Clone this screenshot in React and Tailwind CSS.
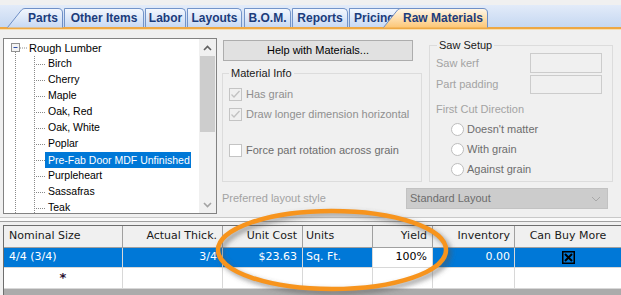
import React from "react";

const treeItems = [
  "Birch",
  "Cherry",
  "Maple",
  "Oak, Red",
  "Oak, White",
  "Poplar",
  "Pre-Fab Door MDF Unfinished",
  "Purpleheart",
  "Sassafras",
  "Teak",
];

const SlantTab = ({ label, width, active, className, textClass }) => {
  const w = width;
  const d = `M0.5,19.5 L14.5,2 Q15.8,0.5 18,0.5 L${w - 5},0.5 Q${w - 0.5},0.5 ${w - 0.5},5 L${w - 0.5},19.5`;
  const gid = active ? "tabActive" : "tabPlain";
  return (
    <div className={`relative h-[19px] shrink-0 flex items-center ${className}`}>
      <svg width={w} height={20} className="absolute left-0 top-0">
        <defs>
          <linearGradient id={gid} x1="0" y1="0" x2="0" y2="1">
            <stop offset="0" stopColor={active ? "#fff8ea" : "#f3f7fd"} />
            <stop offset="1" stopColor={active ? "#fcc777" : "#c7d9f4"} />
          </linearGradient>
        </defs>
        <path d={d} fill={`url(#${gid})`} stroke="#6f8fc6" />
      </svg>
      <span className={`relative text-[12px] font-bold text-[#1b3c7c] ${textClass}`}>
        {label}
      </span>
    </div>
  );
};

const Tab = ({ label, className }) => (
  <div
    className={`h-[19px] shrink-0 flex items-center justify-center border border-b-0 border-[#7394c9] rounded-tr-[5px] rounded-tl-[1px] bg-[linear-gradient(to_bottom,#f3f7fd,#c7d9f4)] text-[12px] font-bold text-[#1b3c7c] ${className}`}
  >
    {label}
  </div>
);

const DisabledCheck = ({ checked }) => (
  <span
    className={`w-[13px] h-[13px] shrink-0 border border-[#c4c4c4] flex items-center justify-center ${
      checked ? "bg-[#f0f0f0]" : "bg-white"
    }`}
  >
    {checked && (
      <svg width="11" height="11" viewBox="0 0 11 11">
        <path d="M1.5,5.5 L4,8 L9.5,2" fill="none" stroke="#c2c2c2" strokeWidth="1.3" />
      </svg>
    )}
  </span>
);

const Radio = ({ label }) => (
  <div className="flex items-center h-[20px] pl-[15px]">
    <span className="w-[13px] h-[13px] rounded-full border border-[#bdbdbd] bg-white shrink-0"></span>
    <span className="ml-[3px] text-[#6d6d6d]">{label}</span>
  </div>
);

const App = () => {
  return (
    <div className="relative w-[621px] h-[295px] overflow-hidden bg-[#f0f0f0] font-['Liberation_Sans',Arial,sans-serif] text-[11px] text-black flex flex-col">
      {/* tab strip */}
      <div className="h-[27px] shrink-0 flex items-end bg-[linear-gradient(to_bottom,#f0f0f0_0px,#f0f0f0_5px,#e2ebf9_5px,#c6d8f2_27px)]">
        <SlantTab label="Parts" width={56} className="ml-[7px] w-[56px]" textClass="pl-[21px]" />
        <Tab label="Other Items" className="ml-[1px] w-[80px]" />
        <Tab label="Labor" className="ml-[1px] w-[41px]" />
        <Tab label="Layouts" className="ml-[1px] w-[55px]" />
        <Tab label="B.O.M." className="ml-[2px] w-[47px]" />
        <Tab label="Reports" className="ml-[1px] w-[56px]" />
        <div className="ml-[1px] w-[52px] h-[19px] shrink-0 border border-b-0 border-[#7394c9] rounded-tl-[1px] bg-[linear-gradient(to_bottom,#f3f7fd,#c7d9f4)] text-[12px] font-bold text-[#1b3c7c] flex items-center pl-[4px] overflow-hidden">
          Pricing
        </div>
        <SlantTab
          label="Raw Materials"
          width={105}
          active
          className="-ml-[18px] w-[105px] z-10"
          textClass="pl-[20px]"
        />
      </div>
      <div className="h-[2px] shrink-0 bg-[#eea844]"></div>
      <div className="h-[1px] shrink-0 bg-[#f8dfb2]"></div>

      {/* main area */}
      <div className="h-[183px] shrink-0 flex">
        {/* tree */}
        <div className="ml-[3px] mt-[8px] w-[214px] h-[176px] border border-[#828282] bg-white flex">
          <div className="flex-1 pt-[1px] overflow-hidden">
            <div className="h-[16px] flex items-center">
              <svg width="25" height="16" className="shrink-0">
                <rect x="7.5" y="3.5" width="8" height="8" fill="#f4f4f4" stroke="#919191" />
                <path d="M9.5,7.5 H13.5" stroke="#2f50a8" strokeWidth="1" />
                <path d="M16,8 H24" stroke="#8a8a8a" strokeDasharray="1 1" />
                <path d="M11.5,12 V16" stroke="#8a8a8a" strokeDasharray="1 1" />
              </svg>
              <span>Rough Lumber</span>
            </div>
            {treeItems.map((item) => {
              const sel = item.startsWith("Pre-Fab");
              return (
                <div key={item} className="h-[16px] flex items-center">
                  <svg width="44" height="16" className="shrink-0">
                    <path d="M11.5,0 V16" stroke="#8a8a8a" strokeDasharray="1 1" />
                    <path d="M30.5,0 V16" stroke="#8a8a8a" strokeDasharray="1 1" />
                    <path d="M32,8.5 H41" stroke="#8a8a8a" strokeDasharray="1 1" />
                  </svg>
                  <span
                    className={`text-[10.5px] whitespace-nowrap ${
                      sel ? "bg-[#0078d7] text-white -ml-[3px] pl-[3px] pr-[1px] leading-[16px]" : ""
                    }`}
                  >
                    {item}
                  </span>
                </div>
              );
            })}
          </div>
          {/* scrollbar */}
          <div className="w-[17px] shrink-0 bg-[#f0f0f0] flex flex-col">
            <div className="h-[17px] flex items-center justify-center">
              <svg width="9" height="6" viewBox="0 0 9 6">
                <path d="M1,5 L4.5,1.5 L8,5" fill="none" stroke="#606060" strokeWidth="1.6" />
              </svg>
            </div>
            <div className="mx-[1px] h-[76px] bg-[#cdcdcd]"></div>
            <div className="flex-1"></div>
            <div className="h-[17px] flex items-center justify-center">
              <svg width="9" height="6" viewBox="0 0 9 6">
                <path d="M1,1 L4.5,4.5 L8,1" fill="none" stroke="#a3a3a3" strokeWidth="1.6" />
              </svg>
            </div>
          </div>
        </div>

        {/* right panel */}
        <div className="flex-1 pl-[6px] pt-[10px] flex flex-col">
          <div className="flex">
            <div className="w-[200px] shrink-0 flex flex-col">
              <div className="w-[190px] h-[21px] border border-[#adadad] bg-[#e1e1e1] flex items-center justify-center">
                Help with Materials...
              </div>
              <div className="relative mt-[12px] -ml-[1px] w-[200px] h-[109px] border border-[#dcdcdc] pt-[13px] pl-[6px]">
                <span className="absolute -top-[7px] left-[6px] px-[2px] bg-[#f0f0f0] text-[#1a1a1a] leading-[13px]">
                  Material Info
                </span>
                <div className="flex items-center h-[14px] gap-[4px]">
                  <DisabledCheck checked />
                  <span className="text-[#8f8f8f]">Has grain</span>
                </div>
                <div className="flex items-center h-[14px] mt-[6px] gap-[4px]">
                  <DisabledCheck checked />
                  <span className="text-[#8f8f8f]">Draw longer dimension horizontal</span>
                </div>
                <div className="flex items-center h-[14px] mt-[22px] gap-[4px]">
                  <DisabledCheck />
                  <span className="text-[#6d6d6d]">Force part rotation across grain</span>
                </div>
              </div>
            </div>

            <div className="relative ml-[6px] mt-[5px] w-[184px] h-[137px] border border-[#dcdcdc] pt-[7px] pl-[6px] pr-[10px]">
              <span className="absolute -top-[7px] left-[7px] px-[2px] bg-[#f0f0f0] text-[#1a1a1a] leading-[13px]">
                Saw Setup
              </span>
              <div className="flex items-center justify-between h-[20px]">
                <span className="text-[#a3a3a3]">Saw kerf</span>
                <span className="w-[72px] h-[20px] border border-[#cccccc] bg-[#f0f0f0]"></span>
              </div>
              <div className="flex items-center justify-between h-[19px] mt-[2px]">
                <span className="text-[#a3a3a3]">Part padding</span>
                <span className="w-[72px] h-[19px] border border-[#cccccc] bg-[#f0f0f0]"></span>
              </div>
              <div className="h-[18px] mt-[6px] flex items-center text-[#a3a3a3]">
                First Cut Direction
              </div>
              <div className="mt-[1px]">
                <Radio label="Doesn't matter" />
                <Radio label="With grain" />
                <Radio label="Against grain" />
              </div>
            </div>
          </div>

          <div className="mt-[6px] flex items-center -ml-[1px]">
            <span className="text-[#a3a3a3] w-[184px]">Preferred layout style</span>
            <div className="w-[202px] h-[21px] border border-[#c2c2c2] bg-[#cccccc] flex items-center justify-between pl-[3px] pr-[6px] text-[#6d6d6d]">
              <span>Standard Layout</span>
              <svg width="10" height="6" viewBox="0 0 10 6">
                <path d="M1,1 L5,5 L9,1" fill="none" stroke="#a8a8a8" strokeWidth="1" />
              </svg>
            </div>
          </div>
        </div>
      </div>

      {/* splitter */}
      <div className="h-[12px] shrink-0 pt-[4px]">
        <div className="h-[5px] border-t border-[#c9c9c9] border-b border-b-[#a0a0a0] bg-[#fafafa]"></div>
      </div>

      {/* grid */}
      <div className="ml-[3px] flex-1 border-l border-t border-[#6e6e6e] bg-[#ababab] font-['DejaVu_Sans',Verdana,sans-serif] text-[11px]">
        <div className="grid grid-cols-[119px_100px_80px_70px_60px_82px_1fr] h-[22px] bg-[#f0f0f0] text-[#1a1a1a]">
          <div className="border-r border-b border-[#a0a0a0] flex items-center pl-[5px]">Nominal Size</div>
          <div className="border-r border-b border-[#a0a0a0] flex items-center justify-end pr-[5px]">Actual Thick.</div>
          <div className="border-r border-b border-[#a0a0a0] flex items-center justify-end pr-[5px]">Unit Cost</div>
          <div className="border-r border-b border-[#a0a0a0] flex items-center pl-[3px]">Units</div>
          <div className="border-r border-b border-[#a0a0a0] flex items-center justify-end pr-[5px]">Yield</div>
          <div className="border-r border-b border-[#a0a0a0] flex items-center justify-end pr-[4px]">Inventory</div>
          <div className="border-b border-[#a0a0a0] flex items-center justify-center">Can Buy More</div>
        </div>
        <div className="grid grid-cols-[119px_100px_80px_70px_60px_82px_1fr] h-[20px] bg-[#0078d7] text-white">
          <div className="border-r border-b border-[#d8d8d8] flex items-center pl-[5px]">4/4 (3/4)</div>
          <div className="border-r border-b border-[#d8d8d8] flex items-center justify-end pr-[5px]">3/4</div>
          <div className="border-r border-b border-[#d8d8d8] flex items-center justify-end pr-[5px]">$23.63</div>
          <div className="border-r border-b border-[#d8d8d8] flex items-center pl-[3px]">Sq. Ft.</div>
          <div className="border-r border-b border-[#d8d8d8] bg-white text-black flex items-center justify-end pr-[5px]">100%</div>
          <div className="border-r border-b border-[#d8d8d8] flex items-center justify-end pr-[4px]">0.00</div>
          <div className="border-b border-[#d8d8d8] flex items-center justify-center">
            <svg width="13" height="13" viewBox="0 0 13 13">
              <rect x="0.75" y="0.75" width="11.5" height="11.5" fill="none" stroke="#000" strokeWidth="1.5" />
              <path d="M3,3 L10,10 M10,3 L3,10" stroke="#000" strokeWidth="2" />
            </svg>
          </div>
        </div>
        <div className="grid grid-cols-[119px_100px_80px_70px_60px_82px_1fr] h-[20px] bg-white">
          <div className="border-r border-b border-[#d8d8d8] flex items-center justify-center font-bold text-[#2a1030] text-[13px]">*</div>
          <div className="border-r border-b border-[#d8d8d8]"></div>
          <div className="border-r border-b border-[#d8d8d8]"></div>
          <div className="border-r border-b border-[#d8d8d8]"></div>
          <div className="border-r border-b border-[#d8d8d8]"></div>
          <div className="border-r border-b border-[#d8d8d8]"></div>
          <div className="border-b border-[#d8d8d8]"></div>
        </div>
      </div>

      {/* highlight ellipse */}
      <svg width="621" height="295" className="absolute left-0 top-0 pointer-events-none">
        <defs>
          <filter id="blurShadow" x="-20%" y="-20%" width="140%" height="140%">
            <feGaussianBlur stdDeviation="2.5" />
          </filter>
        </defs>
        <ellipse cx="335" cy="253" rx="114" ry="39" fill="none" stroke="#555" strokeOpacity="0.55" strokeWidth="5" filter="url(#blurShadow)" />
        <ellipse cx="332" cy="250" rx="114" ry="39" fill="none" stroke="#f7941d" strokeWidth="4.5" />
      </svg>
    </div>
  );
};

export default App;
